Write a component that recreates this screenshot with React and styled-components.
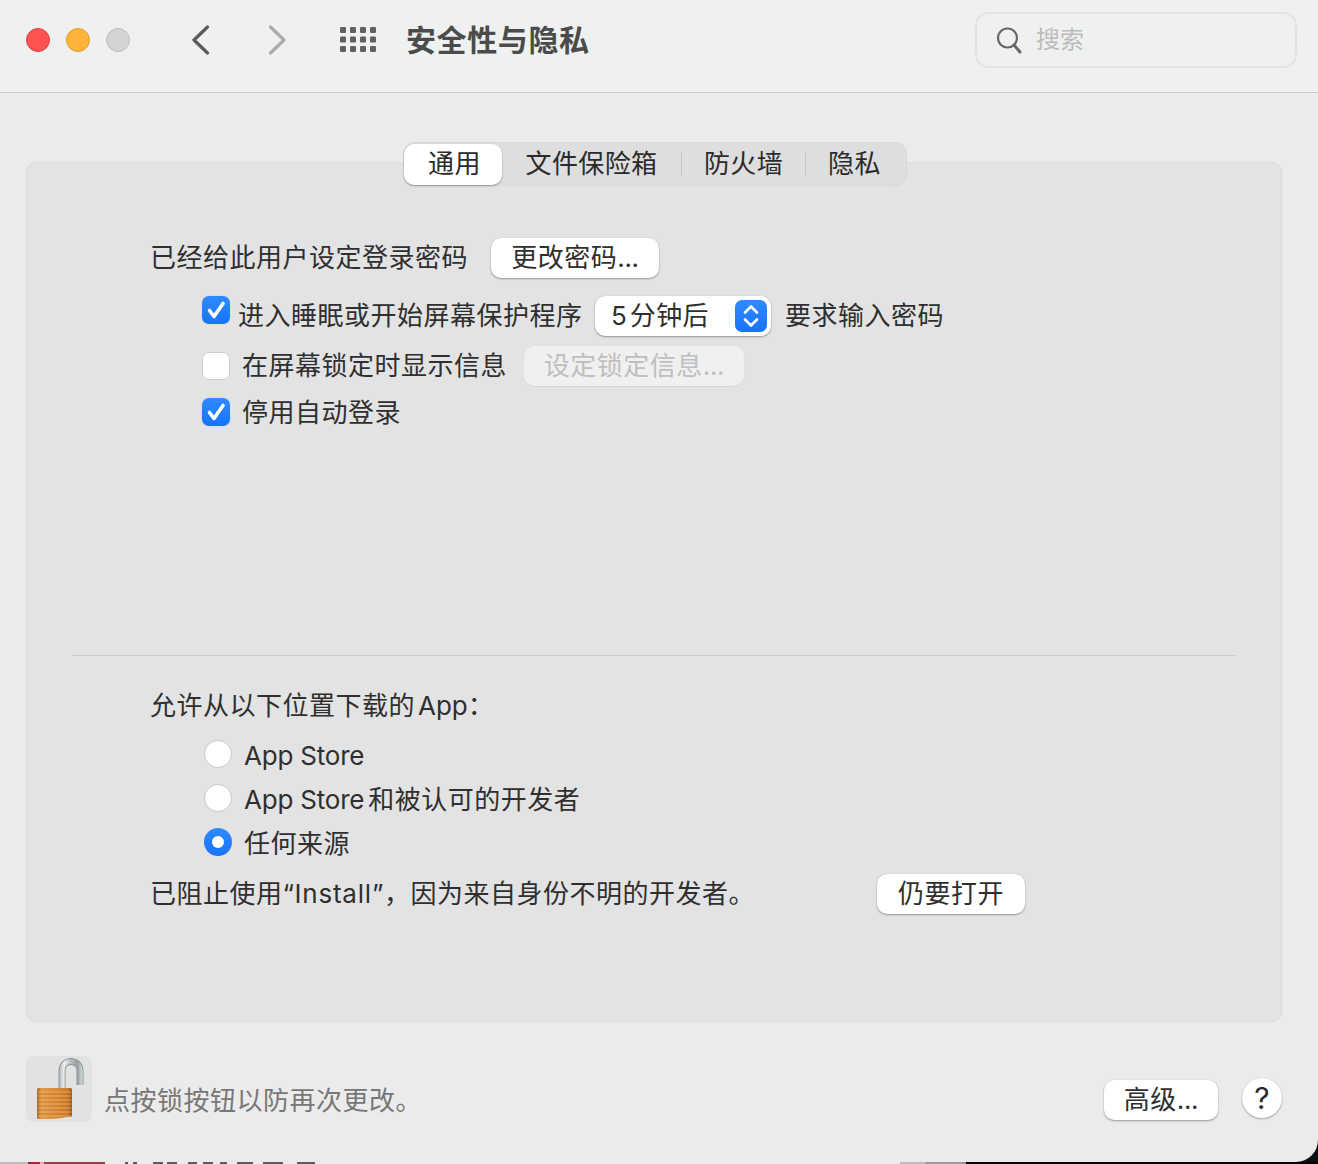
import React from "react";
import styled, { createGlobalStyle } from "styled-components";

const GlobalStyle = createGlobalStyle`
  html, body {
    margin: 0;
    padding: 0;
    background: #0b0f14;
  }
  body {
    font-family: Inter, "Noto Sans CJK SC", sans-serif;
    font-size: 26px;
    color: #2f2f2f;
  }
`;

const Page = styled.div`
  width: 1318px;
  height: 1164px;
  overflow: hidden;
  background: #0b0f14;
`;

const Window = styled.div`
  width: 1318px;
  height: 1162px;
  background: #ebebeb;
  border-bottom-right-radius: 22px;
  overflow: hidden;
`;

// Title bar
const TitleBar = styled.header`
  display: flex;
  align-items: center;
  height: 79px;
  padding: 0 21px 13px 26px;
  background: #eff1f0;
  border-bottom: 1px solid #c9c9c9;
`;

const Lights = styled.div`
  display: flex;
  gap: 16px;
`;

const Light = styled.span`
  width: 24px;
  height: 24px;
  border-radius: 50%;
  box-sizing: border-box;
  background: ${(p) => p.$fill};
  border: 1px solid ${(p) => p.$edge};
`;

const NavIcon = styled.svg`
  display: block;
  flex: none;
  margin-left: ${(p) => p.$ml}px;
`;

const WindowTitle = styled.h1`
  margin: 0 0 0 30px;
  font-size: 30px;
  font-weight: 700;
  line-height: 40px;
  letter-spacing: 0.6px;
  color: #4b4b4b;
`;

const SearchBox = styled.div`
  display: flex;
  align-items: center;
  width: 322px;
  height: 56px;
  margin-left: auto;
  padding-left: 19px;
  gap: 14px;
  box-sizing: border-box;
  border: 2px solid #e3e5e4;
  border-radius: 13px;
  font-size: 24px;
  line-height: 40px;
  color: #bcbcbc;
`;

// Panel
const Panel = styled.section`
  display: flex;
  flex-direction: column;
  width: 1256px;
  height: 860px;
  margin: 69px 0 0 26px;
  box-sizing: border-box;
  background: #e3e3e3;
  border: 1px solid #dbdbdb;
  border-radius: 10px;
`;

const TabBar = styled.div`
  display: flex;
  align-items: center;
  align-self: flex-start;
  width: 504px;
  height: 44px;
  margin: -21px 0 0 376px;
  box-sizing: border-box;
  background: #dedede;
  border: 1px solid #d8d8d8;
  border-radius: 12px;
`;

const Tab = styled.div`
  flex: none;
  width: ${(p) => p.$w}px;
  height: 41px;
  box-sizing: border-box;
  line-height: 39px;
  text-align: center;
  letter-spacing: 0.4px;
  color: #2b2b2b;
  ${(p) =>
    p.$active &&
    `
    padding-left: 3px;
    background: #fff;
    border-radius: 10px;
    box-shadow: 0 1px 2px rgba(0, 0, 0, 0.35);
  `}
`;

const TabSep = styled.span`
  flex: none;
  width: 1px;
  height: 24px;
  background: #c6c6c6;
`;

const Row = styled.div`
  display: flex;
  align-items: center;
  height: ${(p) => p.$h || 40}px;
  margin-top: ${(p) => p.$mt || 0}px;
  padding-left: ${(p) => p.$indent}px;
  letter-spacing: 0.5px;
`;

const Label = styled.span`
  flex: none;
  width: ${(p) => (p.$w ? `${p.$w}px` : "auto")};
  margin-left: ${(p) => p.$ml || 0}px;
  padding-top: ${(p) => p.$drop || 0}px;
  line-height: 40px;
  white-space: nowrap;
`;

// Latin runs sit tighter than the CJK around them
const Latin = styled.span`
  margin: 0 ${(p) => p.$after || 0}px 0 ${(p) => p.$before || 0}px;
  letter-spacing: ${(p) => p.$track || 0}px;
`;

const Dots = styled.span`
  letter-spacing: -0.4px;
`;

const PushButton = styled.div`
  flex: none;
  width: ${(p) => p.$w}px;
  height: 40px;
  line-height: 39px;
  text-align: center;
  margin-top: ${(p) => p.$mt || 0}px;
  background: ${(p) => (p.$disabled ? "#f0f0f0" : "#fff")};
  color: ${(p) => (p.$disabled ? "#bfbfbf" : "#2f2f2f")};
  border-radius: 10px;
  letter-spacing: 0.5px;
  box-shadow: ${(p) =>
    p.$disabled
      ? "0 1px 1px rgba(0, 0, 0, 0.06)"
      : "0 1px 2px rgba(0, 0, 0, 0.35), 0 0 1px rgba(0, 0, 0, 0.15)"};
`;

const Check = styled.span`
  display: flex;
  align-items: center;
  justify-content: center;
  flex: none;
  align-self: ${(p) => (p.$top ? "flex-start" : "center")};
  width: 28px;
  height: 28px;
  box-sizing: border-box;
  border-radius: 7px;
  background: ${(p) =>
    p.$on ? "linear-gradient(#2f8bff, #1673fb)" : "#fff"};
  border: ${(p) => (p.$on ? "none" : "1px solid #cfcfcf")};
  box-shadow: ${(p) => (p.$on ? "0 0 1px rgba(0, 0, 0, 0.25)" : "none")};
`;

const Select = styled.div`
  display: flex;
  align-items: center;
  flex: none;
  width: 176px;
  height: 40px;
  padding: 0 4px 0 16px;
  box-sizing: border-box;
  background: #fff;
  border-radius: 10px;
  box-shadow: 0 1px 2px rgba(0, 0, 0, 0.35), 0 0 1px rgba(0, 0, 0, 0.15);
`;

const SelectValue = styled.span`
  flex: 1;
  line-height: 38px;
  letter-spacing: 0.4px;
`;

const Stepper = styled.span`
  display: flex;
  align-items: center;
  justify-content: center;
  width: 32px;
  height: 32px;
  border-radius: 7px;
  background: linear-gradient(#2f8bff, #1673fb);
`;

const Divider = styled.hr`
  width: 1164px;
  height: 1px;
  margin: 223px 0 0 45px;
  border: 0;
  background: #cbcbcb;
`;

const Radio = styled.span`
  display: flex;
  align-items: center;
  justify-content: center;
  flex: none;
  width: 28px;
  height: 28px;
  box-sizing: border-box;
  border-radius: 50%;
  background: ${(p) =>
    p.$on ? "linear-gradient(#2f8bff, #1673fb)" : "#fff"};
  border: ${(p) => (p.$on ? "none" : "1px solid #cacaca")};
  &::after {
    content: "";
    display: ${(p) => (p.$on ? "block" : "none")};
    width: 12px;
    height: 12px;
    border-radius: 50%;
    background: #fff;
  }
`;

// Footer
const Footer = styled.footer`
  display: flex;
  align-items: flex-start;
  padding: 34px 36px 0 26px;
`;

const LockTile = styled.div`
  flex: none;
  width: 66px;
  height: 66px;
  border-radius: 8px;
  background: #e2e2e2;
`;

const LockNote = styled.span`
  margin: 25px 0 0 12px;
  line-height: 40px;
  letter-spacing: 0.5px;
  color: #777;
`;

const FooterRight = styled.div`
  display: flex;
  align-items: flex-start;
  gap: 24px;
  margin-left: auto;
`;

const HelpButton = styled.div`
  width: 40px;
  height: 40px;
  margin-top: 22px;
  border-radius: 50%;
  background: #fff;
  font-size: 30px;
  font-weight: 400;
  line-height: 40px;
  text-align: center;
  color: #2b2b2b;
  box-shadow: 0 1px 2px rgba(0, 0, 0, 0.3), 0 0 1px rgba(0, 0, 0, 0.15);
`;

// What shows of the desktop under the window
const DesktopStrip = styled.div`
  display: flex;
  height: 2px;
`;

const StripPiece = styled.span`
  flex: none;
  width: ${(p) => p.$w}px;
  background: ${(p) => p.$c};
`;

const CheckMark = () => (
  <svg width="28" height="28" viewBox="0 0 28 28">
    <path
      d="M7.500 14.500l4.500 6L21 7.500"
      fill="none"
      stroke="#fff"
      strokeWidth="3.600"
      strokeLinecap="round"
      strokeLinejoin="round"
    />
  </svg>
);

const shacklePath = "M36 33V15C36 9 40 5.500 45 5.500s9 3.500 9 9.500v14";

const LockIcon = () => (
  <svg width="66" height="66" viewBox="0 0 66 66">
    <defs>
      <linearGradient id="shackle" gradientUnits="userSpaceOnUse" x1="33" y1="0" x2="57" y2="0">
        <stop offset="0" stopColor="#aab1b5" />
        <stop offset="0.22" stopColor="#f0f2f3" />
        <stop offset="0.5" stopColor="#b5bbbf" />
        <stop offset="0.78" stopColor="#98a0a4" />
        <stop offset="1" stopColor="#dde0e2" />
      </linearGradient>
      <linearGradient id="lockBody" x1="0" y1="0" x2="1" y2="0">
        <stop offset="0" stopColor="#a9651f" />
        <stop offset="0.12" stopColor="#e39a48" />
        <stop offset="0.55" stopColor="#d98a36" />
        <stop offset="0.88" stopColor="#cb7c2b" />
        <stop offset="1" stopColor="#9c5a1a" />
      </linearGradient>
    </defs>
    <path d={shacklePath} fill="none" stroke="#8a9397" strokeWidth="7" />
    <path d={shacklePath} fill="none" stroke="url(#shackle)" strokeWidth="5.200" />
    <path d="M13 32h31c1.500 0 2 .5 2 2v26.500c-9 1-16 2.500-23 2.500H13c-1.500 0-2-.5-2-2V34c0-1.500.5-2 2-2z" fill="url(#lockBody)" />
    {[36, 40, 44, 48, 52, 56, 60].map((y) => (
      <path key={y} d={`M11.500 ${y}h34`} stroke="#f7c48a" strokeOpacity="0.5" strokeWidth="1" />
    ))}
    {[38, 42, 46, 50, 54, 58].map((y) => (
      <path key={y} d={`M11.500 ${y}h34`} stroke="#a9651f" strokeOpacity="0.35" strokeWidth="1" />
    ))}
  </svg>
);

const stripText = "#5c5c5c";
const stripGap = "#ebebeb";
const stripPieces = [
  [28, "#bdbdbd"],
  [12, "#a8262c"],
  [4, "#d8b0b0"],
  [61, "#a63a40"],
  [20, stripGap],
  [3, stripText],
  [5, stripGap],
  [4, stripText],
  [16, stripGap],
  [10, stripText],
  [4, stripGap],
  [10, stripText],
  [11, stripGap],
  [9, stripText],
  [6, stripGap],
  [10, stripText],
  [7, stripGap],
  [7, stripText],
  [10, stripGap],
  [16, stripText],
  [10, stripGap],
  [20, stripText],
  [14, stripGap],
  [18, stripText],
  [585, stripGap],
  [26, "#bbbbbb"],
  [40, "#999999"],
  [352, "#000"],
];

const App = () => (
  <Page>
    <GlobalStyle />
    <Window>
      <TitleBar>
        <Lights>
          <Light $fill="#fe5352" $edge="#e4403f" />
          <Light $fill="#feb43a" $edge="#e09b2b" />
          <Light $fill="#d3d5d4" $edge="#bcbebd" />
        </Lights>
        <NavIcon $ml={61} width="19" height="30" viewBox="0 0 19 30">
          <path d="M16.500 2L3 15l13.500 13" fill="none" stroke="#5a5c5c" strokeWidth="3.200" strokeLinecap="round" strokeLinejoin="round" />
        </NavIcon>
        <NavIcon $ml={58} width="19" height="30" viewBox="0 0 19 30">
          <path d="M2.500 2L16 15 2.500 28" fill="none" stroke="#ababab" strokeWidth="3.200" strokeLinecap="round" strokeLinejoin="round" />
        </NavIcon>
        <NavIcon $ml={53} width="36" height="25" viewBox="0 0 36 25">
          {[0, 1, 2].map((r) =>
            [0, 1, 2, 3].map((c) => (
              <rect key={`${r}-${c}`} x={c * 10} y={r * 9.500} width="6" height="6" rx="1.200" fill="#5f6161" />
            ))
          )}
        </NavIcon>
        <WindowTitle>安全性与隐私</WindowTitle>
        <SearchBox>
          <svg width="26" height="28" viewBox="0 0 26 28">
            <circle cx="11.500" cy="12" r="9.500" fill="none" stroke="#666867" strokeWidth="2.200" />
            <path d="M18 19l6 7" stroke="#666867" strokeWidth="3" strokeLinecap="round" />
          </svg>
          搜索
        </SearchBox>
      </TitleBar>

      <Panel>
        <TabBar>
          <Tab $w={98} $active>通用</Tab>
          <Tab $w={179}>文件保险箱</Tab>
          <TabSep />
          <Tab $w={123}>防火墙</Tab>
          <TabSep />
          <Tab $w={97}>隐私</Tab>
        </TabBar>

        <Row $mt={52} $indent={123}>
          <Label $w={341}>已经给此用户设定登录密码</Label>
          <PushButton $w={168}>更改密码<Dots>...</Dots></PushButton>
        </Row>
        <Row $mt={18} $indent={175}>
          <Check $on $top><CheckMark /></Check>
          <Label $ml={8} $w={357}>进入睡眠或开始屏幕保护程序</Label>
          <Select>
            <SelectValue><Latin $after={3}>5</Latin>分钟后</SelectValue>
            <Stepper>
              <svg width="18" height="26" viewBox="0 0 18 26">
                <path d="M3 9.500L9 3.500l6 6M3 16.500l6 6 6-6" fill="none" stroke="#fff" strokeWidth="2.600" strokeLinecap="round" strokeLinejoin="round" />
              </svg>
            </Stepper>
          </Select>
          <Label $ml={14}>要求输入密码</Label>
        </Row>
        <Row $mt={10} $indent={175}>
          <Check />
          <Label $ml={12} $w={282}>在屏幕锁定时显示信息</Label>
          <PushButton $w={220} $disabled>设定锁定信息<Dots>...</Dots></PushButton>
        </Row>
        <Row $mt={6} $indent={175}>
          <Check $on><CheckMark /></Check>
          <Label $ml={12} $drop={2}>停用自动登录</Label>
        </Row>

        <Divider />

        <Row $mt={30} $indent={123}>
          <Label>允许从以下位置下载的<Latin $before={3}>App</Latin>：</Label>
        </Row>
        <Row $mt={6} $h={44} $indent={177}>
          <Radio />
          <Label $ml={12} $drop={4}><Latin $track={-0.2}>App Store</Latin></Label>
        </Row>
        <Row $h={44} $indent={177}>
          <Radio />
          <Label $ml={12} $drop={4}><Latin $track={-0.2} $after={4}>App Store</Latin>和被认可的开发者</Label>
        </Row>
        <Row $h={44} $indent={177}>
          <Radio $on />
          <Label $ml={12} $drop={4}>任何来源</Label>
        </Row>
        <Row $mt={10} $indent={123}>
          <Label $w={727}>已阻止使用“<Latin $track={0.8}>Install</Latin>”，因为来自身份不明的开发者。</Label>
          <PushButton $w={148}>仍要打开</PushButton>
        </Row>
      </Panel>

      <Footer>
        <LockTile>
          <LockIcon />
        </LockTile>
        <LockNote>点按锁按钮以防再次更改。</LockNote>
        <FooterRight>
          <PushButton $w={114} $mt={24}>高级<Dots>...</Dots></PushButton>
          <HelpButton>?</HelpButton>
        </FooterRight>
      </Footer>
    </Window>
    <DesktopStrip>
      {stripPieces.map(([w, c], i) => (
        <StripPiece key={i} $w={w} $c={c} />
      ))}
    </DesktopStrip>
  </Page>
);

export default App;
